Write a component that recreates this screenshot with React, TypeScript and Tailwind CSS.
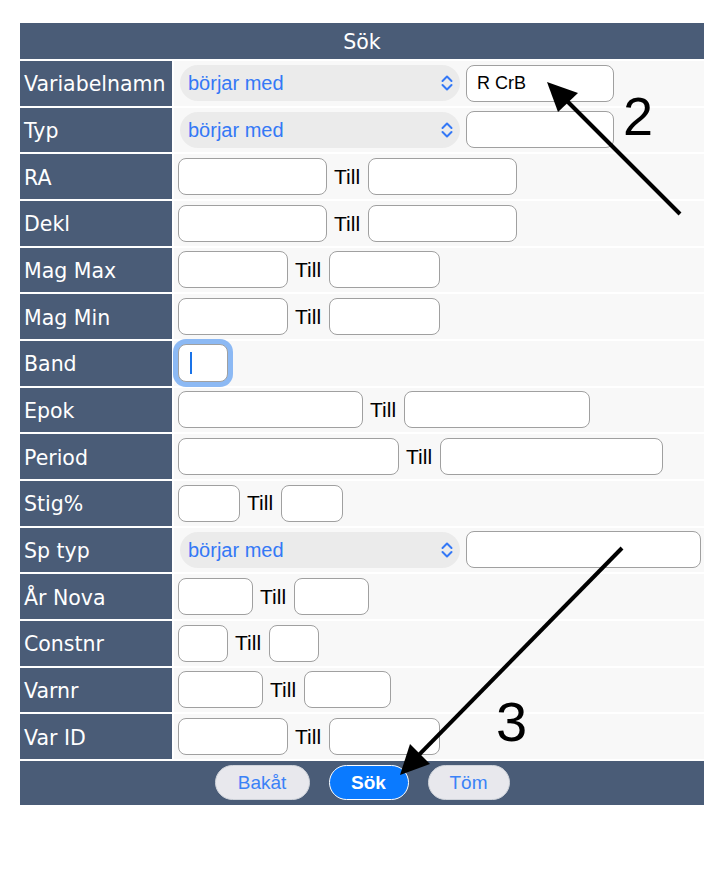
import React from "react";

type Row =
  | { label: string; kind: "select"; inputW: number; value?: string }
  | { label: string; kind: "range"; a: number; b: number }
  | { label: string; kind: "focus"; w: number };

const rows: Row[] = [
  { label: "Variabelnamn", kind: "select", inputW: 148, value: "R CrB" },
  { label: "Typ", kind: "select", inputW: 148 },
  { label: "RA", kind: "range", a: 149, b: 149 },
  { label: "Dekl", kind: "range", a: 149, b: 149 },
  { label: "Mag Max", kind: "range", a: 110, b: 111 },
  { label: "Mag Min", kind: "range", a: 110, b: 111 },
  { label: "Band", kind: "focus", w: 50 },
  { label: "Epok", kind: "range", a: 185, b: 186 },
  { label: "Period", kind: "range", a: 221, b: 223 },
  { label: "Stig%", kind: "range", a: 62, b: 62 },
  { label: "Sp typ", kind: "select", inputW: 235 },
  { label: "År Nova", kind: "range", a: 75, b: 75 },
  { label: "Constnr", kind: "range", a: 50, b: 50 },
  { label: "Varnr", kind: "range", a: 85, b: 87 },
  { label: "Var ID", kind: "range", a: 110, b: 111 },
];

const inputCls =
  "h-[37px] rounded-[8px] border-[1.5px] border-[#a0a0a0] bg-white px-[10px] text-[18px] text-black outline-none";

function Field({ w, value }: { w: number; value?: string }) {
  return (
    <input
      readOnly
      defaultValue={value}
      style={{ width: w }}
      className={inputCls}
    />
  );
}

function FakeSelect() {
  return (
    <div className="ml-[2px] flex h-[36px] w-[280px] items-center justify-between rounded-[18px] bg-[#ebebeb] pl-[8px] pr-[6px] text-[20px] text-[#3478f6]">
      <span>börjar med</span>
      <svg width="14" height="18" viewBox="0 0 14 18" fill="none">
        <path
          d="M2.5 7L7 2.5L11.5 7M2.5 11L7 15.5L11.5 11"
          stroke="#3478f6"
          strokeWidth="2"
          strokeLinecap="round"
          strokeLinejoin="round"
        />
      </svg>
    </div>
  );
}

function Cell({ row }: { row: Row }) {
  if (row.kind === "select") {
    return (
      <div className="flex items-center gap-[6px]">
        <FakeSelect />
        <Field w={row.inputW} value={row.value} />
      </div>
    );
  }
  if (row.kind === "focus") {
    return (
      <div className="flex items-center">
        <div className="relative h-[38px] w-[50px] rounded-[8px] border-[1.5px] border-[#a0a0a0] bg-white ring-[5px] ring-[#8cb9f4]">
          <div className="absolute left-[11px] top-[7px] h-[22px] w-[2px] bg-[#1a73e8]" />
        </div>
      </div>
    );
  }
  return (
    <div className="flex items-center">
      <Field w={row.a} />
      <span className="ml-[7px] mr-[8px] text-[21px] text-black">Till</span>
      <Field w={row.b} />
    </div>
  );
}

export default function App() {
  return (
    <div
      className="relative h-[879px] w-[728px] overflow-hidden bg-white"
      style={{ fontFamily: '"Liberation Sans", Arial, sans-serif' }}
    >
      <div className="ml-[20px] mt-[23px] flex w-[684px] flex-col gap-[2px]">
        <div
          className="flex h-[36px] items-center justify-center bg-[#4a5c77] pt-[2px] text-[20.5px] text-white"
          style={{ fontFamily: '"DejaVu Sans", Verdana, sans-serif' }}
        >
          Sök
        </div>
        {rows.map((row) => (
          <div key={row.label} className="flex h-[44.67px] gap-[2px]">
            <div
              className="flex w-[152px] items-center bg-[#4a5c77] pl-[4px] pt-[3px] text-[20.5px] text-white"
              style={{ fontFamily: '"DejaVu Sans", Verdana, sans-serif' }}
            >
              {row.label}
            </div>
            <div className="flex flex-1 items-center bg-[#f8f8f8] pl-[4px]">
              <Cell row={row} />
            </div>
          </div>
        ))}
        <div className="flex h-[44px] items-center justify-center gap-[19px] bg-[#4a5c77]">
          <button className="h-[35px] w-[95px] rounded-full border border-[#cfd3da] bg-[#e8e8ed] text-[19px] text-[#3a82f7]">
            Bakåt
          </button>
          <button className="h-[35px] w-[80px] rounded-full border-[1.5px] border-white bg-[#0a7aff] text-[19px] font-bold text-white">
            Sök
          </button>
          <button className="h-[35px] w-[82px] rounded-full border border-[#cfd3da] bg-[#e8e8ed] text-[19px] text-[#3a82f7]">
            Töm
          </button>
        </div>
      </div>

      {/* annotation arrows */}
      <svg
        className="pointer-events-none absolute left-0 top-0"
        width="728"
        height="879"
        viewBox="0 0 728 879"
      >
        <line x1="680" y1="214" x2="556" y2="90" stroke="black" strokeWidth="4" />
        <polygon points="547,82 578,93 558,112" fill="black" />
        <line x1="622" y1="548" x2="408" y2="766" stroke="black" strokeWidth="4" />
        <polygon points="400,775 410,744 430,764" fill="black" />
        <text x="623" y="135" fontSize="54" fontFamily="Liberation Sans, Arial, sans-serif" fill="black">
          2
        </text>
        <text x="496" y="741" fontSize="56" fontFamily="Liberation Sans, Arial, sans-serif" fill="black">
          3
        </text>
      </svg>
    </div>
  );
}
